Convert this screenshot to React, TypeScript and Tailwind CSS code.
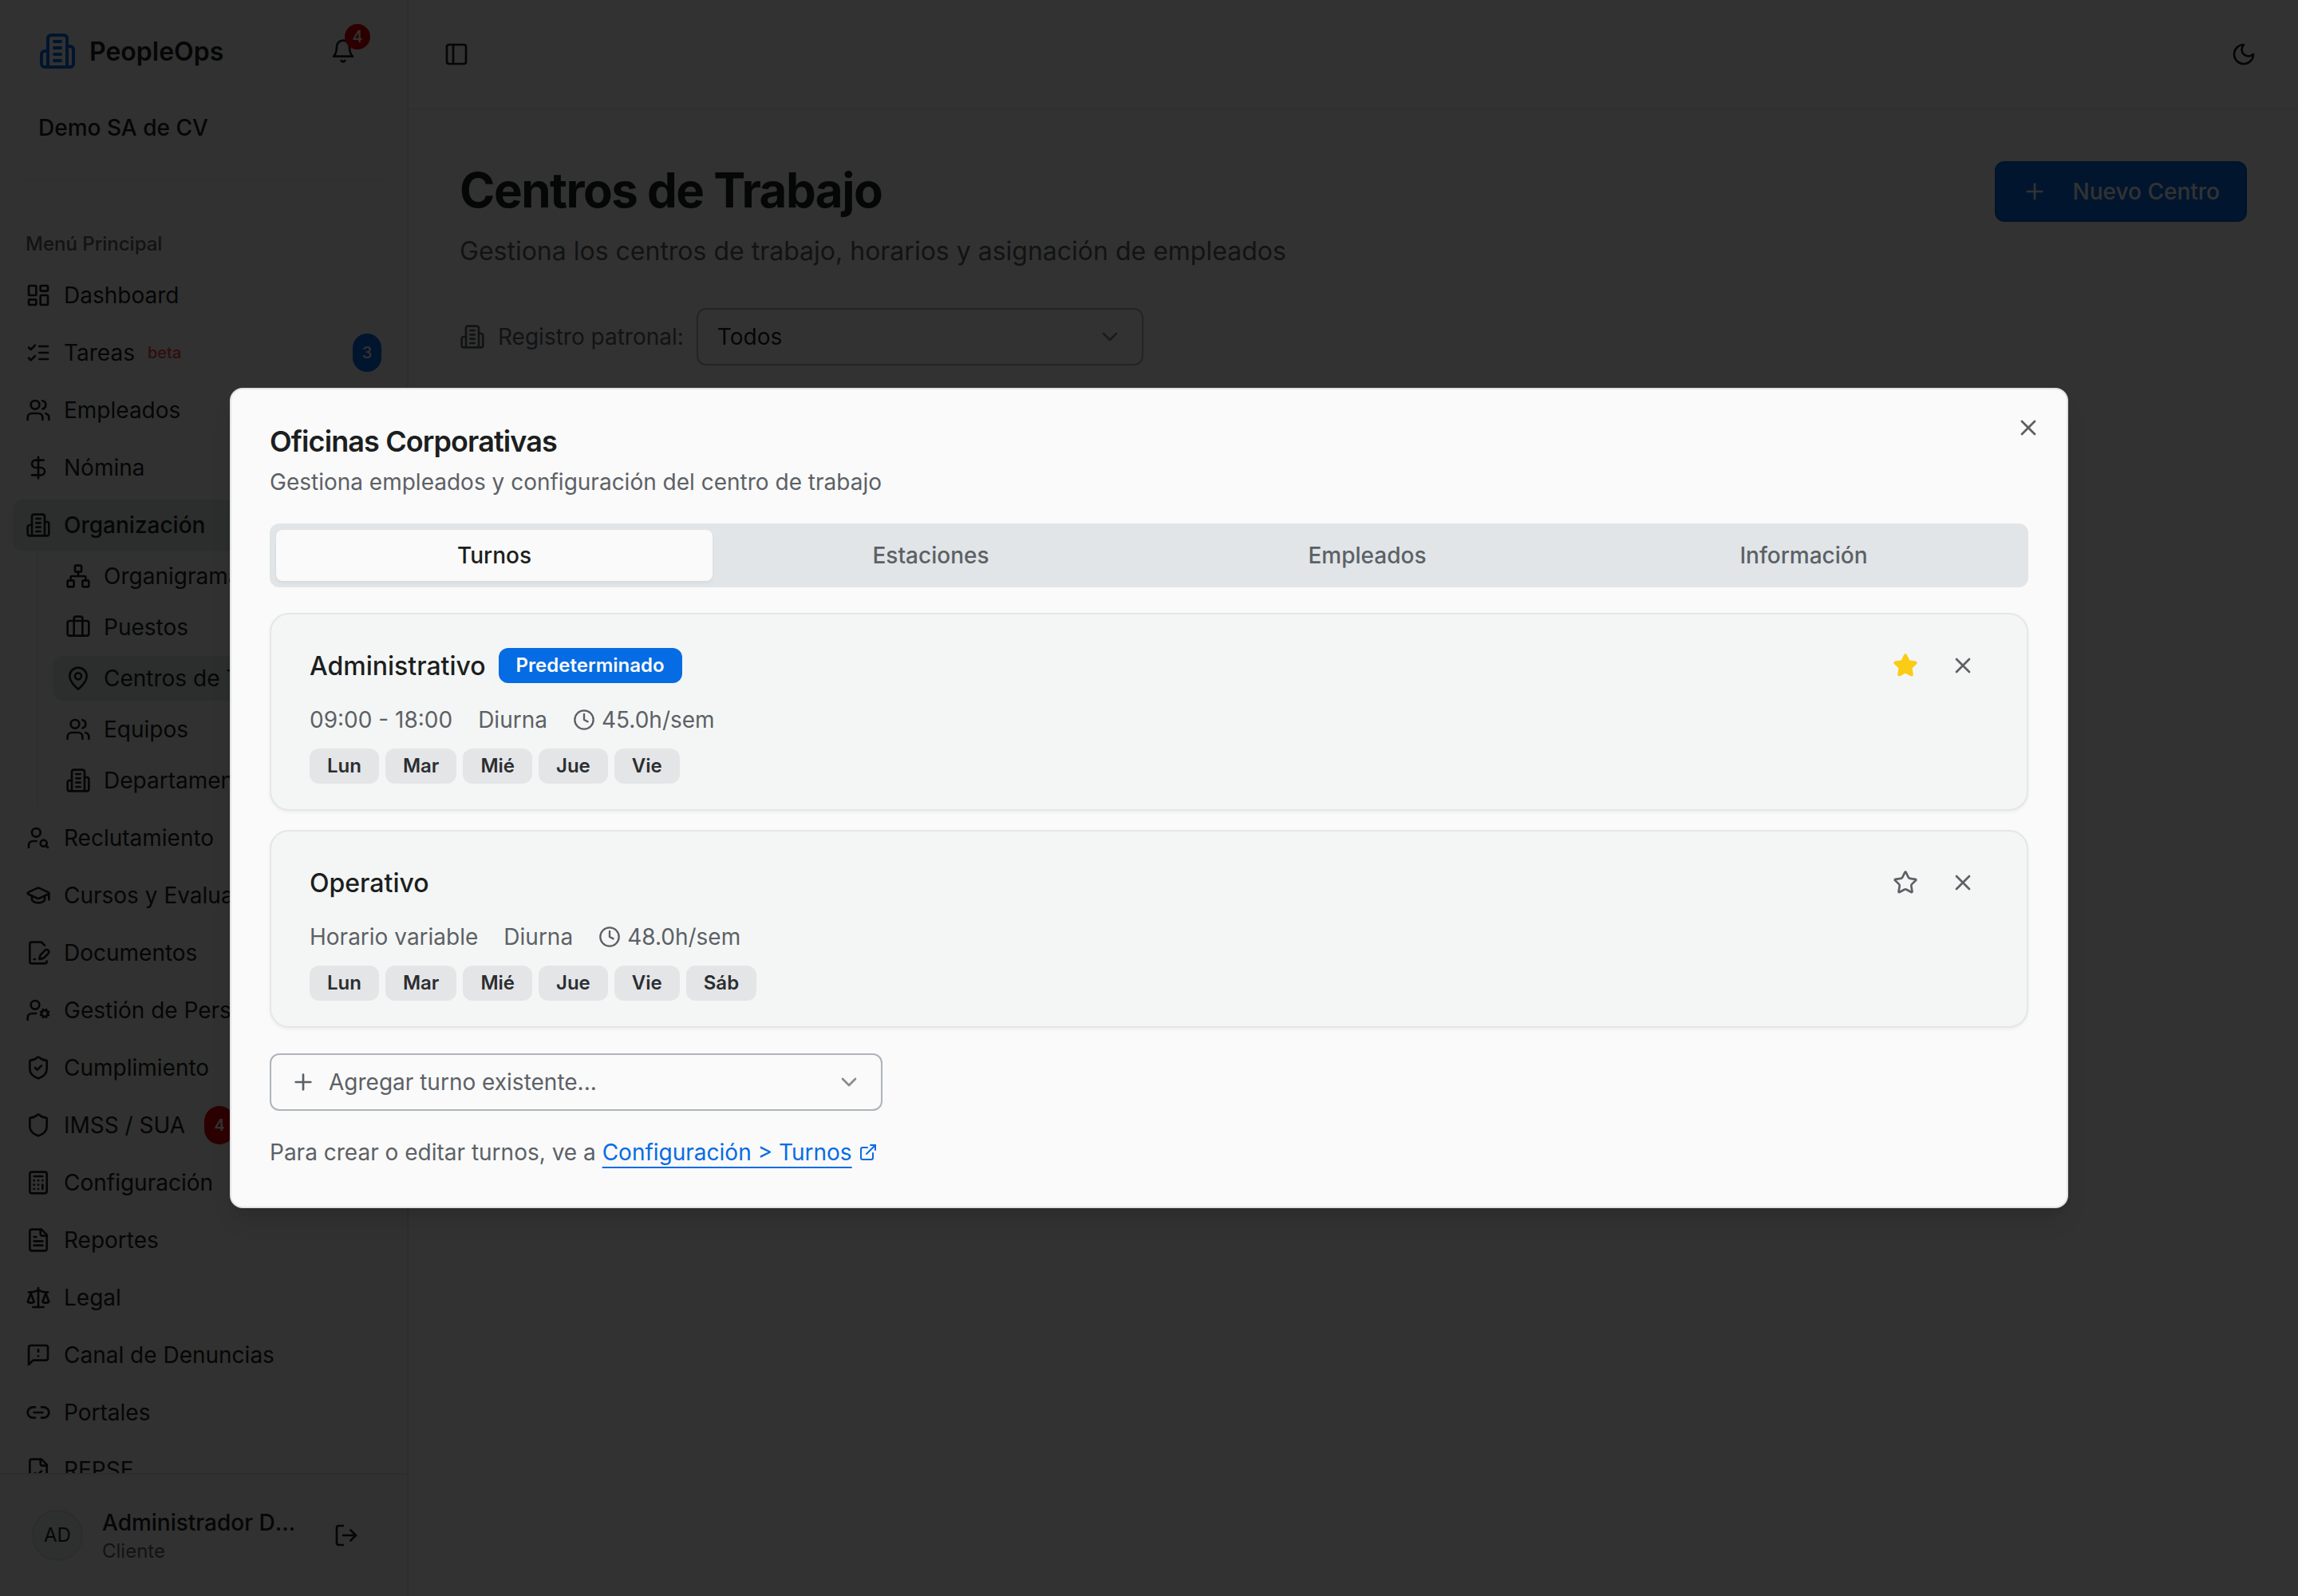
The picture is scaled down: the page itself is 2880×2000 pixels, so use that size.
import type { ComponentType, ReactNode } from "react";
import {
  Briefcase,
  Calculator,
  ChevronDown,
  DollarSign,
  ExternalLink,
  GraduationCap,
  LayoutDashboard,
  Link2,
  MapPin,
  Network,
  PanelLeft,
  Plus,
  Shield,
  ShieldCheck,
  UserCog,
  UserSearch,
  Users,
  X,
} from "lucide-react";
import { clsx } from "clsx";

interface IconProps {
  className?: string;
}

type Icon = ComponentType<IconProps>;

function Glyph({ className, children }: IconProps & { children: ReactNode }) {
  return (
    <svg
      viewBox="0 0 24 24"
      fill="none"
      stroke="currentColor"
      strokeWidth={2}
      strokeLinecap="round"
      strokeLinejoin="round"
      className={className}
    >
      {children}
    </svg>
  );
}

const Building: Icon = ({ className }) => (
  <Glyph className={className}>
    <path d="M6 22V4a2 2 0 0 1 2-2h8a2 2 0 0 1 2 2v18Z" />
    <path d="M6 12H4a2 2 0 0 0-2 2v6a2 2 0 0 0 2 2h2" />
    <path d="M18 9h2a2 2 0 0 1 2 2v9a2 2 0 0 1-2 2h-2" />
    <path d="M10 6h4" />
    <path d="M10 10h4" />
    <path d="M10 14h4" />
    <path d="M10 18h4" />
  </Glyph>
);

const Bell: Icon = ({ className }) => (
  <Glyph className={className}>
    <path d="M6 8a6 6 0 0 1 12 0c0 7 3 9 3 9H3s3-2 3-9" />
    <path d="M10.3 21a1.94 1.94 0 0 0 3.4 0" />
  </Glyph>
);

const Moon: Icon = ({ className }) => (
  <Glyph className={className}>
    <path d="M12 3a6 6 0 0 0 9 9 9 9 0 1 1-9-9Z" />
  </Glyph>
);

const Checklist: Icon = ({ className }) => (
  <Glyph className={className}>
    <path d="m3 17 2 2 4-4" />
    <path d="m3 7 2 2 4-4" />
    <path d="M13 6h8" />
    <path d="M13 12h8" />
    <path d="M13 18h8" />
  </Glyph>
);

const FilePen: Icon = ({ className }) => (
  <Glyph className={className}>
    <path d="m18 5-2.414-2.414A2 2 0 0 0 14.172 2H6a2 2 0 0 0-2 2v16a2 2 0 0 0 2 2h12a2 2 0 0 0 2-2" />
    <path d="M21.378 12.626a1 1 0 0 0-3.004-3.004l-4.01 4.012a2 2 0 0 0-.506.854l-.837 2.87a.5.5 0 0 0 .62.62l2.87-.837a2 2 0 0 0 .854-.506z" />
    <path d="M8 18h1" />
  </Glyph>
);

const FileText: Icon = ({ className }) => (
  <Glyph className={className}>
    <path d="M15 2H6a2 2 0 0 0-2 2v16a2 2 0 0 0 2 2h12a2 2 0 0 0 2-2V7Z" />
    <path d="M14 2v4a2 2 0 0 0 2 2h4" />
    <path d="M10 9H8" />
    <path d="M16 13H8" />
    <path d="M16 17H8" />
  </Glyph>
);

const FileCheck: Icon = ({ className }) => (
  <Glyph className={className}>
    <path d="M15 2H6a2 2 0 0 0-2 2v16a2 2 0 0 0 2 2h12a2 2 0 0 0 2-2V7Z" />
    <path d="M14 2v4a2 2 0 0 0 2 2h4" />
    <path d="m9 15 2 2 4-4" />
  </Glyph>
);

const Scale: Icon = ({ className }) => (
  <Glyph className={className}>
    <path d="m16 16 3-8 3 8c-.87.65-1.92 1-3 1s-2.13-.35-3-1Z" />
    <path d="m2 16 3-8 3 8c-.87.65-1.92 1-3 1s-2.13-.35-3-1Z" />
    <path d="M7 21h10" />
    <path d="M12 3v18" />
    <path d="M3 7h2c2 0 5-1 7-2 2 1 5 2 7 2h2" />
  </Glyph>
);

const MessageWarning: Icon = ({ className }) => (
  <Glyph className={className}>
    <path d="M21 15a2 2 0 0 1-2 2H7l-4 4V5a2 2 0 0 1 2-2h14a2 2 0 0 1 2 2z" />
    <path d="M12 7v2" />
    <path d="M12 13h.01" />
  </Glyph>
);

const LogOut: Icon = ({ className }) => (
  <Glyph className={className}>
    <path d="M9 21H5a2 2 0 0 1-2-2V5a2 2 0 0 1 2-2h4" />
    <path d="m16 17 5-5-5-5" />
    <path d="M21 12H9" />
  </Glyph>
);

const Clock: Icon = ({ className }) => (
  <Glyph className={className}>
    <circle cx="12" cy="12" r="10" />
    <path d="M12 6v6l4 2" />
  </Glyph>
);

const Star: Icon = ({ className }) => (
  <Glyph className={className}>
    <path d="M11.525 2.295a.53.53 0 0 1 .95 0l2.31 4.679a2.123 2.123 0 0 0 1.595 1.16l5.166.756a.53.53 0 0 1 .294.904l-3.736 3.638a2.123 2.123 0 0 0-.611 1.878l.882 5.14a.53.53 0 0 1-.771.56l-4.618-2.428a2.122 2.122 0 0 0-1.973 0L6.396 21.01a.53.53 0 0 1-.77-.56l.881-5.139a2.122 2.122 0 0 0-.611-1.879L2.16 9.795a.53.53 0 0 1 .294-.906l5.165-.755a2.122 2.122 0 0 0 1.597-1.16z" />
  </Glyph>
);

interface NavItem {
  label: string;
  icon: Icon;
  active?: boolean;
  beta?: boolean;
  count?: number;
  alert?: number;
  children?: NavItem[];
}

const navItems: NavItem[] = [
  { label: "Dashboard", icon: LayoutDashboard },
  { label: "Tareas", icon: Checklist, beta: true, count: 3 },
  { label: "Empleados", icon: Users },
  { label: "Nómina", icon: DollarSign },
  {
    label: "Organización",
    icon: Building,
    active: true,
    children: [
      { label: "Organigrama", icon: Network },
      { label: "Puestos", icon: Briefcase },
      { label: "Centros de Trabajo", icon: MapPin, active: true },
      { label: "Equipos", icon: Users },
      { label: "Departamentos", icon: Building },
    ],
  },
  { label: "Reclutamiento", icon: UserSearch },
  { label: "Cursos y Evaluaciones", icon: GraduationCap },
  { label: "Documentos", icon: FilePen },
  { label: "Gestión de Personal", icon: UserCog },
  { label: "Cumplimiento", icon: ShieldCheck },
  { label: "IMSS / SUA", icon: Shield, alert: 4 },
  { label: "Configuración", icon: Calculator },
  { label: "Reportes", icon: FileText },
  { label: "Legal", icon: Scale },
  { label: "Canal de Denuncias", icon: MessageWarning },
  { label: "Portales", icon: Link2 },
  { label: "REPSE", icon: FileCheck },
];

const tabs = ["Turnos", "Estaciones", "Empleados", "Información"];

const shifts = [
  {
    name: "Administrativo",
    isDefault: true,
    schedule: "09:00 - 18:00",
    type: "Diurna",
    hours: "45.0h/sem",
    days: ["Lun", "Mar", "Mié", "Jue", "Vie"],
  },
  {
    name: "Operativo",
    isDefault: false,
    schedule: "Horario variable",
    type: "Diurna",
    hours: "48.0h/sem",
    days: ["Lun", "Mar", "Mié", "Jue", "Vie", "Sáb"],
  },
];

function NavRow({ item }: { item: NavItem }) {
  const { label, icon: ItemIcon, active, beta, count, alert, children } = item;
  return (
    <li>
      <div
        className={clsx(
          "flex h-16 items-center gap-4 rounded-xl px-4",
          active && "bg-[#dbe1df] font-medium"
        )}
      >
        <ItemIcon className="size-8 shrink-0" />
        <span className="whitespace-nowrap">{label}</span>
        {beta && <span className="text-[20px] font-medium text-[#ef4444]">beta</span>}
        {count && (
          <span className="ml-auto flex h-12 w-9 items-center justify-center rounded-full bg-[#056ce4] text-[20px] font-medium text-[#fafafa]">
            {count}
          </span>
        )}
        {alert && (
          <span className="ml-2 flex h-12 w-[38px] items-center justify-center rounded-full bg-[#dc0000] text-[20px] font-semibold text-[#fafafa]">
            {alert}
          </span>
        )}
      </div>
      {children && (
        <ul className="ml-[30px] flex flex-col gap-2 border-l-2 border-[#e0e3e3] py-1 pl-[18px]">
          {children.map(({ label, icon: ChildIcon, active }) => (
            <li
              key={label}
              className={clsx(
                "flex h-14 items-center gap-4 rounded-xl px-4",
                active && "bg-[#dbe1df]"
              )}
            >
              <ChildIcon className="size-8 shrink-0" />
              <span className="whitespace-nowrap">{label}</span>
            </li>
          ))}
        </ul>
      )}
    </li>
  );
}

function Sidebar() {
  return (
    <aside className="flex h-full w-[512px] shrink-0 flex-col border-r-2 border-[#dde0e0] bg-[#f2f2f2]">
      <div className="flex h-32 items-center pr-11 pl-12">
        <Building className="size-12 text-[#056ce4]" />
        <span className="ml-4 pt-0.5 text-[32px] font-semibold">PeopleOps</span>
        <div className="relative ml-auto flex size-[72px] items-center justify-center">
          <Bell className="size-8" />
          <span className="absolute top-0.5 right-0.5 flex size-8 items-center justify-center rounded-full bg-[#dc0000] text-[20px] font-medium text-[#fafafa]">
            4
          </span>
        </div>
      </div>
      <p className="mt-3 px-12 leading-10 font-medium">Demo SA de CV</p>
      <div className="mx-8 mt-11 h-0.5 shrink-0 bg-[#e5e8e8]" />

      <nav className="mt-12 min-h-0 flex-1 overflow-hidden px-4">
        <p className="flex h-16 items-center px-4 text-[24px] font-medium text-[#5c6166]">
          Menú Principal
        </p>
        <ul className="flex flex-col gap-2">
          {navItems.map((item) => (
            <NavRow key={item.label} item={item} />
          ))}
        </ul>
      </nav>

      <div className="flex h-[154px] shrink-0 items-center gap-6 border-t-2 border-[#dde0e0] px-10">
        <div className="flex size-16 shrink-0 items-center justify-center rounded-full border-2 border-[#dadddd] bg-[#e6eae9] text-[24px]">
          AD
        </div>
        <div className="w-[246px]">
          <p className="truncate leading-10 font-medium">Administrador Demo</p>
          <p className="text-[24px] leading-8 text-[#5c6166]">Cliente</p>
        </div>
        <div className="flex size-[72px] shrink-0 items-center justify-center">
          <LogOut className="size-8" />
        </div>
      </div>
    </aside>
  );
}

function MainContent() {
  return (
    <div className="flex min-w-0 flex-1 flex-col">
      <header className="flex h-[138px] items-center justify-between border-b-2 border-[#e2e5e5] px-8">
        <div className="flex size-14 items-center justify-center">
          <PanelLeft className="size-8" />
        </div>
        <div className="flex size-[72px] items-center justify-center">
          <Moon className="size-8" />
        </div>
      </header>

      <main className="flex flex-col gap-12 p-16">
        <div className="flex items-start justify-between">
          <div>
            <h1 className="text-[60px] leading-[72px] font-bold tracking-tight">
              Centros de Trabajo
            </h1>
            <p className="mt-[17px] -mb-px text-[32px] leading-[48px] text-[#5c6166]">
              Gestiona los centros de trabajo, horarios y asignación de empleados
            </p>
          </div>
          <button className="flex h-[76px] items-center gap-8 rounded-xl border-2 border-[#0561cd] bg-[#056ce4] px-8 font-medium text-[#fafafa]">
            <Plus className="size-8" />
            Nuevo Centro
          </button>
        </div>

        <div className="flex items-center gap-4">
          <Building className="size-8 text-[#5c6166]" />
          <span className="text-[#5c6166]">Registro patronal:</span>
          <div className="flex h-[72px] w-[560px] items-center justify-between rounded-xl border-2 border-[#aeb4ba] px-6">
            <span>Todos</span>
            <ChevronDown className="size-8 opacity-50" />
          </div>
        </div>
      </main>
    </div>
  );
}

function ShiftCard({ shift }: { shift: (typeof shifts)[number] }) {
  return (
    <div className="flex flex-col gap-4 rounded-3xl border-2 border-[#e4e7e7] bg-[#f4f6f5] px-12 py-8 shadow-[0_2px_4px_0_rgb(0_0_0/0.05)]">
      <div className="flex h-16 items-center gap-4">
        <h3 className="pt-0.5 text-[32px] font-medium">{shift.name}</h3>
        {shift.isDefault && (
          <span className="flex h-11 items-center rounded-xl bg-[#056ce4] px-[22px] text-[24px] font-semibold text-[#fafafa]">
            Predeterminado
          </span>
        )}
        <div className="ml-auto flex gap-2 text-[#5c6166]">
          <button className="flex size-16 items-center justify-center">
            <Star
              className={clsx("size-8", shift.isDefault && "fill-[#facc15] text-[#facc15]")}
            />
          </button>
          <button className="flex size-16 items-center justify-center">
            <X className="size-8" />
          </button>
        </div>
      </div>
      <div className="flex h-10 items-center gap-8 text-[#5c6166]">
        <span>{shift.schedule}</span>
        <span>{shift.type}</span>
        <span className="flex items-center gap-2">
          <Clock className="size-7" />
          {shift.hours}
        </span>
      </div>
      <div className="flex gap-2">
        {shift.days.map((day) => (
          <span
            key={day}
            className="flex h-11 items-center rounded-xl bg-[#e4e5e7] px-[22px] text-[24px] font-semibold text-[#2b2e31]"
          >
            {day}
          </span>
        ))}
      </div>
    </div>
  );
}

function CenterDialog() {
  return (
    <div
      role="dialog"
      className="relative w-[2304px] rounded-2xl border-2 border-[#e1e3e3] bg-[#fafafa] p-12 shadow-[0_20px_30px_-6px_rgb(0_0_0/0.1),0_8px_12px_-8px_rgb(0_0_0/0.1)]"
    >
      <button className="absolute top-8 right-8 opacity-70">
        <X className="size-8" />
      </button>

      <h2 className="-mt-px text-[36px] leading-none font-semibold tracking-tight">
        Oficinas Corporativas
      </h2>
      <p className="mt-[13px] leading-10 text-[#5c6166]">
        Gestiona empleados y configuración del centro de trabajo
      </p>

      <div className="mt-8 grid h-20 grid-cols-4 rounded-xl bg-[#e1e5e8] p-2 font-medium">
        {tabs.map((tab, i) => (
          <button
            key={tab}
            className={clsx(
              "flex items-center justify-center rounded-lg",
              i === 0
                ? "bg-[#fafafa] shadow-[0_2px_4px_0_rgb(0_0_0/0.05)]"
                : "text-[#5c6166]"
            )}
          >
            {tab}
          </button>
        ))}
      </div>

      <div className="mt-8 flex flex-col gap-6">
        {shifts.map((shift) => (
          <ShiftCard key={shift.name} shift={shift} />
        ))}
      </div>

      <div className="mt-8 flex h-[72px] w-[768px] items-center gap-4 rounded-xl border-2 border-[#aeb4ba] px-6 text-[#5c6166]">
        <Plus className="size-8" />
        <span>Agregar turno existente...</span>
        <ChevronDown className="ml-auto size-8 text-[#1c1e20] opacity-50" />
      </div>

      <p className="mt-8 flex leading-10 whitespace-pre text-[#5c6166]">
        Para crear o editar turnos, ve a{" "}
        <a className="flex items-center gap-2 text-[#056ce4]">
          <span className="underline decoration-2 underline-offset-8">
            Configuración &gt; Turnos
          </span>
          <ExternalLink className="size-6" />
        </a>
      </p>
    </div>
  );
}

export default function App() {
  return (
    <div className="relative flex h-[2000px] w-[2880px] overflow-hidden bg-[#fafafa] font-['Inter',sans-serif] text-[28px] text-[#1c1e20] antialiased">
      <Sidebar />
      <MainContent />
      <div className="absolute inset-0 flex items-center justify-center bg-black/80">
        <CenterDialog />
      </div>
    </div>
  );
}
